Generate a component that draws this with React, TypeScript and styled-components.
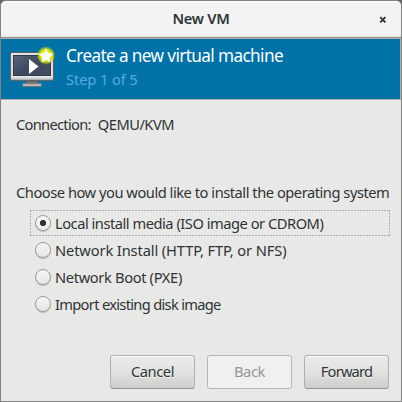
import React, { useState } from "react";
import styled, { createGlobalStyle } from "styled-components";

const GlobalStyle = createGlobalStyle`
  *, *::before, *::after { box-sizing: border-box; }
  body {
    margin: 0;
    overflow: hidden;
    background: #656565;
    font-family: "Noto Sans", "Open Sans", sans-serif;
    font-size: 14.67px;
    color: #2e3436;
  }
`;

const Window = styled.main`
  width: 402px;
  height: 402px;
  display: flex;
  flex-direction: column;
  border: 1px solid #828282;
  border-radius: 6px 6px 0 0;
  overflow: hidden;
  background: #e8e8e6;
`;

const TitleBar = styled.header`
  flex: none;
  height: 38px;
  display: grid;
  grid-template-columns: 36px 1fr 36px;
  align-items: center;
  background: linear-gradient(#fff 0, #f3f3f3 2px, #f3f3f3 33px, #e6e6e5 36px, #8d8f8c 36px, #8d8f8c 37px, #b3b0a8 37px);
`;

const WindowTitle = styled.h1`
  grid-column: 2;
  margin: -4px 0 0;
  text-align: center;
  font-size: 14.67px;
  line-height: 34px;
  font-weight: 600;
  letter-spacing: -0.3px;
`;

const CloseButton = styled.button`
  width: 36px;
  height: 36px;
  padding: 0 0 1px;
  border: 0;
  background: none;
  display: flex;
  align-items: center;
  justify-content: center;
`;

const Banner = styled.section`
  flex: none;
  height: 61px;
  display: flex;
  padding: 8px 0 0 9px;
  gap: 12px;
  background: #0072a8;
  border: solid #b3b0a8;
  border-width: 0 1px 1px 0;
`;

const BannerText = styled.div`
  white-space: nowrap;
`;

const Heading = styled.h2`
  margin: -3px 0 0;
  font-size: 17.2px;
  font-weight: 400;
  line-height: 24px;
  letter-spacing: -0.62px;
  color: #fff;
`;

const Step = styled.p`
  margin: 0;
  line-height: 22px;
  color: #5baade;
  letter-spacing: -0.1px;
`;

const Content = styled.section`
  flex: 1;
  padding: 14px 11px 0 15px;
  white-space: nowrap;
`;

const Text = styled.span<{ $tracking: number }>`
  letter-spacing: ${(p) => p.$tracking}px;
`;

const Connection = styled.div`
  display: flex;
  gap: 7px;
  height: 20px;
  line-height: 20px;
`;

const Prompt = styled.p`
  margin: 48px 0 8px;
  height: 20px;
  line-height: 20px;
  letter-spacing: -0.465px;
`;

const Options = styled.div`
  margin-left: 14px;
`;

const focusDash = "#afb0ad 0 2px, transparent 2px 3px";

const Option = styled.label<{ $focused: boolean }>`
  height: 27px;
  display: flex;
  align-items: center;
  gap: 4px;
  padding: 0 0 1px 5px;
  background: ${(p) =>
    p.$focused
      ? `repeating-linear-gradient(90deg, ${focusDash}) 0 0 / 100% 1px no-repeat,
         repeating-linear-gradient(90deg, ${focusDash}) 0 25px / 100% 1px no-repeat,
         repeating-linear-gradient(${focusDash}) 0 0 / 1px 26px no-repeat,
         repeating-linear-gradient(${focusDash}) 100% 0 / 1px 26px no-repeat`
      : "none"};
`;

const Radio = styled.input`
  appearance: none;
  flex: none;
  width: 16px;
  height: 16px;
  margin: 0;
  border: 1px solid #999a97;
  border-radius: 50%;
  outline: none;
  background: linear-gradient(#f5f5f5, #e5e5e3);
  box-shadow: 0 1px 0 #bdbebb;
  &:checked {
    background: radial-gradient(circle at 7px 7px, #2e3436 2.8px, transparent 3.5px), linear-gradient(#fafafa, #eaeae8);
  }
`;

const Actions = styled.footer`
  flex: none;
  display: flex;
  justify-content: flex-end;
  gap: 12px;
  padding: 0 12px 12px 0;
`;

const Action = styled.button`
  width: 85px;
  height: 34px;
  padding: 0 0 2px;
  border: 1px solid #b0b1ae;
  border-bottom-color: #949690;
  border-radius: 3px;
  background: linear-gradient(#ebebea, #e2e2e0 50%, #cececb);
  box-shadow: inset 0 1px #fafafa;
  color: #2e3436;
  font: inherit;
  text-shadow: 0 1px #f5f5f4;
  &:disabled {
    color: #939695;
    background: #f0f0f0;
    border-color: #b5b6b3;
    box-shadow: none;
    text-shadow: none;
  }
`;

function MachineIcon() {
  return (
    <svg width="44" height="42" viewBox="0 0 44 42" aria-hidden="true" overflow="visible">
      <defs>
        <linearGradient id="frame" x2="0" y2="1">
          <stop stopColor="#e4e4e4" /><stop offset=".8" stopColor="#d8d8d8" /><stop offset=".88" stopColor="#ececec" /><stop offset="1" stopColor="#9a9a9a" />
        </linearGradient>
        <linearGradient id="screen" x2="1" y2="1">
          <stop stopColor="#59657a" /><stop offset=".5" stopColor="#3f4a60" /><stop offset="1" stopColor="#404b5d" />
        </linearGradient>
        <linearGradient id="stand" x2="0" y2="1">
          <stop stopColor="#4a4e52" /><stop offset="1" stopColor="#8b8f92" />
        </linearGradient>
        <radialGradient id="glow">
          <stop stopColor="#fff766" /><stop offset=".45" stopColor="#f0f020" /><stop offset=".7" stopColor="#cfe010" stopOpacity=".9" /><stop offset="1" stopColor="#a8d000" stopOpacity="0" />
        </radialGradient>
      </defs>
      <path d="M16 33h12v4H16z" fill="url(#stand)" />
      <rect x="12.5" y="36.5" width="19" height="3" rx="1" fill="#b4b6b8" stroke="#73777a" />
      <rect x=".5" y="5.5" width="43" height="28" rx="1.5" fill="url(#frame)" stroke="#626262" />
      <rect x="3.5" y="8.5" width="37" height="20" fill="url(#screen)" stroke="#303b4d" />
      <path d="M19 12v15l9.5-7.5z" fill="#fff" />
      <circle cx="36" cy="8.5" r="9.5" fill="url(#glow)" />
      <path d="m36 2.2 1.8 4.5 4.9.4-3.7 3.2 1.1 4.7-4.1-2.5-4.1 2.5 1.1-4.7-3.7-3.2 4.9-.4z" fill="#fff" stroke="#fff" strokeWidth=".7" strokeLinejoin="round" />
    </svg>
  );
}

const methods = [
  { label: "Local install media (ISO image or CDROM)", tracking: -0.475 },
  { label: "Network Install (HTTP, FTP, or NFS)", tracking: -0.12 },
  { label: "Network Boot (PXE)", tracking: -0.35 },
  { label: "Import existing disk image", tracking: -0.69 },
];

export default function App() {
  const [selected, setSelected] = useState(0);
  return (
    <>
      <GlobalStyle />
      <Window>
        <TitleBar>
          <WindowTitle>New VM</WindowTitle>
          <CloseButton aria-label="Close">
            <svg width="8" height="8" viewBox="0 0 8 8"><path d="M1.2 1.2 6.4 6.4M6.4 1.2 1.2 6.4" stroke="#2e3436" strokeWidth="1.8" /></svg>
          </CloseButton>
        </TitleBar>
        <Banner>
          <MachineIcon />
          <BannerText>
            <Heading>Create a new virtual machine</Heading>
            <Step>Step 1 of 5</Step>
          </BannerText>
        </Banner>
        <Content>
          <Connection>
            <Text $tracking={-0.7}>Connection:</Text>
            <Text $tracking={-0.5}>QEMU/KVM</Text>
          </Connection>
          <Prompt>Choose how you would like to install the operating system</Prompt>
          <Options>
            {methods.map(({ label, tracking }, index) => (
              <Option key={label} $focused={selected === index}>
                <Radio type="radio" name="method" checked={selected === index} onChange={() => setSelected(index)} />
                <Text $tracking={tracking}>{label}</Text>
              </Option>
            ))}
          </Options>
        </Content>
        <Actions>
          <Action><Text $tracking={-0.45}>Cancel</Text></Action>
          <Action disabled><Text $tracking={-0.4}>Back</Text></Action>
          <Action><Text $tracking={-0.8}>Forward</Text></Action>
        </Actions>
      </Window>
    </>
  );
}
